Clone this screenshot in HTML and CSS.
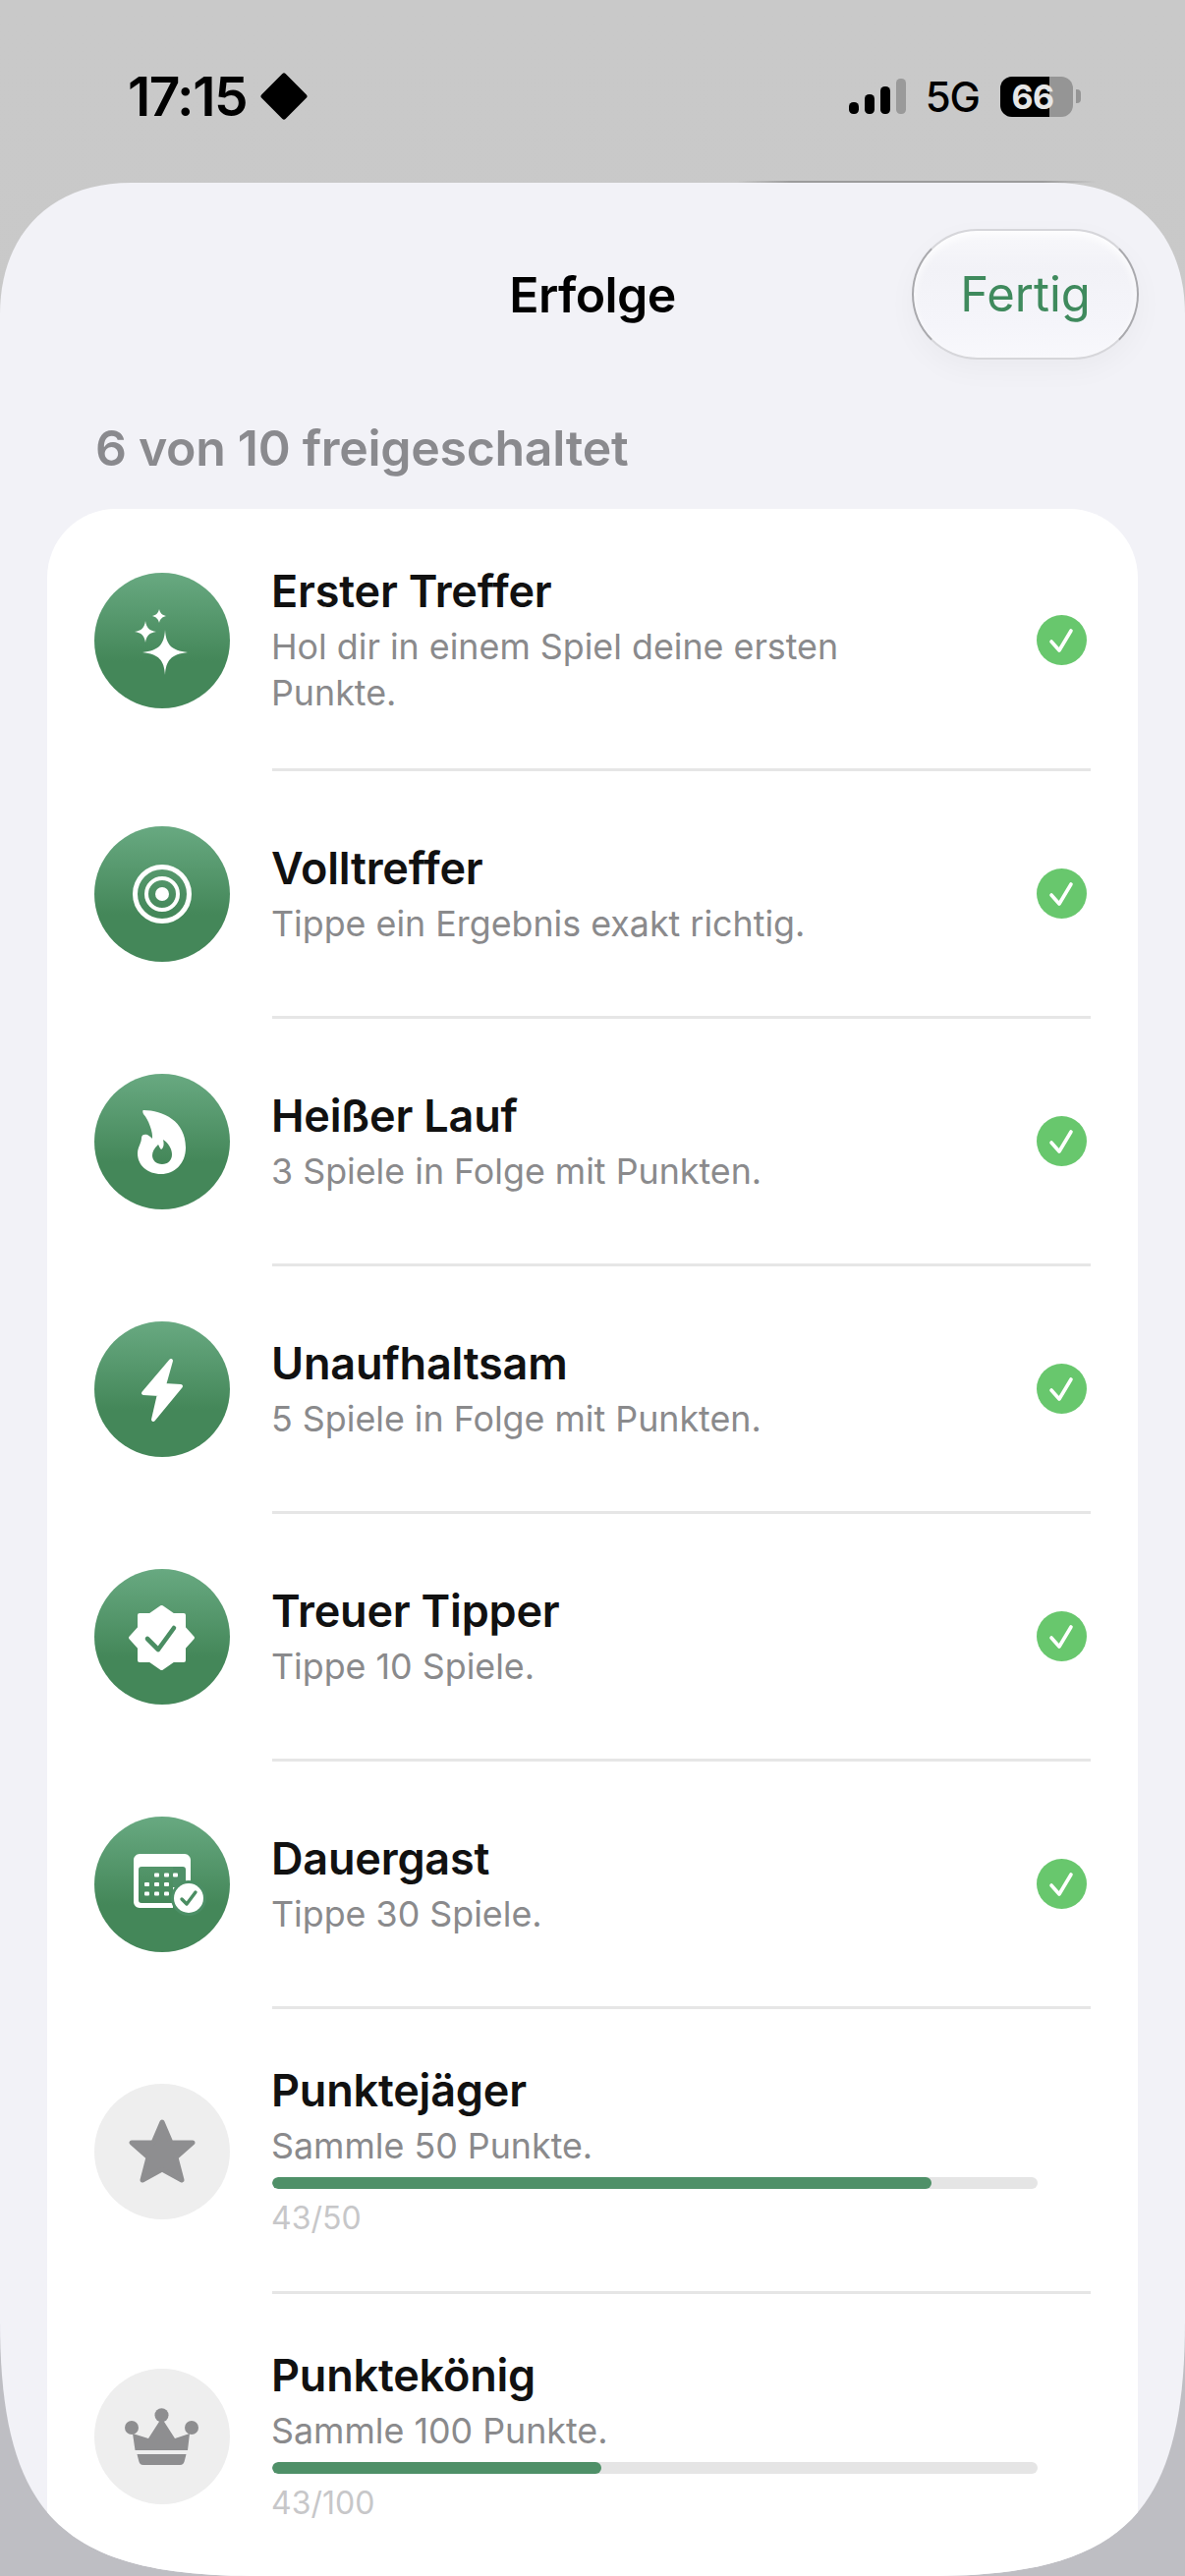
FILE: index.html
```html
<!DOCTYPE html>
<html lang="de">
<head>
<meta charset="utf-8">
<title>Erfolge</title>
<link rel="stylesheet" href="styles.css">
</head>
<body>
<header class="status">
  <div class="status-left">
    <span class="time">17:15</span>
    <svg class="focus" viewBox="0 0 46 46"><path d="M23 3 L43 23 L23 43 L3 23 Z" fill="#000" stroke="#000" stroke-width="5" stroke-linejoin="round"/></svg>
  </div>
  <div class="status-right">
    <svg class="signal" viewBox="0 0 58 36"><rect x="0" y="24" width="10" height="12" rx="4.5" fill="#000"/><rect x="16" y="16" width="10" height="20" rx="4.5" fill="#000"/><rect x="32" y="8" width="10" height="28" rx="4.5" fill="#000"/><rect x="48" y="0" width="10" height="36" rx="4.5" fill="#9a9a9a"/></svg>
    <span class="net">5G</span>
    <div class="battery"><div class="battery-level"></div><span class="battery-text">66</span></div>
    <div class="battery-nub"></div>
  </div>
  <div class="edge"></div>
</header>

<main class="sheet">
  <div class="nav">
    <span></span>
    <h1 class="nav-title">Erfolge</h1>
    <button class="done">Fertig</button>
  </div>
  <p class="summary">6 von 10 freigeschaltet</p>

  <section class="card">
    <div class="row">
      <div class="badge">
        <svg viewBox="0 0 138 138"><path class="w" d="M72 58C73 73 78 79 95 81C78 83 73 89 72 104C71 89 66 83 49 81C66 79 71 73 72 58Z"/><path class="w" d="M52 49C53 56 56 59 63 60C56 61 53 64 52 71C51 64 48 61 41 60C48 59 51 56 52 49Z"/><path class="w" d="M66 37C67 41 69 43 73 44C69 45 67 47 66 51C65 47 63 45 59 44C63 43 65 41 66 37Z"/></svg>
      </div>
      <div class="text">
        <h2 class="name">Erster Treffer</h2>
        <p class="desc">Hol dir in einem Spiel deine ersten<br>Punkte.</p>
      </div>
      <svg class="tick" viewBox="0 0 51 51"><circle cx="25.5" cy="25.5" r="25.5" fill="#68c76d"/><path d="M15 27L23 36L35 16" fill="none" stroke="#fff" stroke-width="3.6" stroke-linecap="round" stroke-linejoin="round"/></svg>
    </div>
    <div class="sep"></div>

    <div class="row">
      <div class="badge">
        <svg viewBox="0 0 138 138"><circle cx="69" cy="69" r="27.5" fill="none" stroke="#fff" stroke-width="5"/><circle cx="69" cy="69" r="16" fill="none" stroke="#fff" stroke-width="4"/><circle cx="69" cy="69" r="7" fill="#fff"/></svg>
      </div>
      <div class="text">
        <h2 class="name">Volltreffer</h2>
        <p class="desc">Tippe ein Ergebnis exakt richtig.</p>
      </div>
      <svg class="tick" viewBox="0 0 51 51"><circle cx="25.5" cy="25.5" r="25.5" fill="#68c76d"/><path d="M15 27L23 36L35 16" fill="none" stroke="#fff" stroke-width="3.6" stroke-linecap="round" stroke-linejoin="round"/></svg>
    </div>
    <div class="sep"></div>

    <div class="row">
      <div class="badge">
        <svg viewBox="0 0 138 138"><path class="w" fill-rule="evenodd" d="M50 37C70 37 93 48 93 75C93 92 81 102 68 102C54 102 44 93 44 81C44 74 48 71 48 65C48 62 51 61 54 62C56 63 58 65 59 66C60 60 55 46 50 41C49 39 49 37 50 37ZM70 67C71 71 71 75 68 77C66 75 66 73 65 72C61 76 59 79 59 83C59 88 63 92 69 92C75 92 79 88 79 82C79 76 75 70 70 67Z"/></svg>
      </div>
      <div class="text">
        <h2 class="name">Heißer Lauf</h2>
        <p class="desc">3 Spiele in Folge mit Punkten.</p>
      </div>
      <svg class="tick" viewBox="0 0 51 51"><circle cx="25.5" cy="25.5" r="25.5" fill="#68c76d"/><path d="M15 27L23 36L35 16" fill="none" stroke="#fff" stroke-width="3.6" stroke-linecap="round" stroke-linejoin="round"/></svg>
    </div>
    <div class="sep"></div>

    <div class="row">
      <div class="badge">
        <svg viewBox="0 0 138 138"><path class="w sw" d="M78 40L50 73L66 74L60 100L88 66L71 65Z"/></svg>
      </div>
      <div class="text">
        <h2 class="name">Unaufhaltsam</h2>
        <p class="desc">5 Spiele in Folge mit Punkten.</p>
      </div>
      <svg class="tick" viewBox="0 0 51 51"><circle cx="25.5" cy="25.5" r="25.5" fill="#68c76d"/><path d="M15 27L23 36L35 16" fill="none" stroke="#fff" stroke-width="3.6" stroke-linecap="round" stroke-linejoin="round"/></svg>
    </div>
    <div class="sep"></div>

    <div class="row">
      <div class="badge">
        <svg viewBox="0 0 138 138"><path class="w sw" d="M68.5 39L80 47H91V60L100 70L91 80V93H80L68.5 101L57 93H46V80L37 70L46 60V47H57Z"/><path d="M54 71L65 82L81 60" fill="none" stroke="#4a8d62" stroke-width="4.6" stroke-linecap="round" stroke-linejoin="round"/></svg>
      </div>
      <div class="text">
        <h2 class="name">Treuer Tipper</h2>
        <p class="desc">Tippe 10 Spiele.</p>
      </div>
      <svg class="tick" viewBox="0 0 51 51"><circle cx="25.5" cy="25.5" r="25.5" fill="#68c76d"/><path d="M15 27L23 36L35 16" fill="none" stroke="#fff" stroke-width="3.6" stroke-linecap="round" stroke-linejoin="round"/></svg>
    </div>
    <div class="sep"></div>

    <div class="row">
      <div class="badge">
        <svg viewBox="0 0 138 138">
          <path class="w" fill-rule="evenodd" d="M46 38H92C95 38 98 41 98 44V80H80V93H46C43 93 40 90 40 87V44C40 41 43 38 46 38ZM48 51C46 51 45 52 45 54V85C45 87 46 88 48 88H80V51Z"/>
          <path d="M80 51H90C92 51 93 52 93 54V72H80Z" fill="#4f9068"/>
          <g class="w"><rect x="61" y="57.5" width="5" height="4" rx="1"/><rect x="71" y="57.5" width="5" height="4" rx="1"/><rect x="80" y="57.5" width="5" height="4" rx="1"/><rect x="51" y="67" width="5" height="4" rx="1"/><rect x="61" y="67" width="5" height="4" rx="1"/><rect x="71" y="67" width="5" height="4" rx="1"/><rect x="51" y="76.5" width="5" height="4" rx="1"/><rect x="61" y="76.5" width="5" height="4" rx="1"/><rect x="71" y="76.5" width="5" height="4" rx="1"/></g>
          <circle cx="96" cy="83" r="18" fill="#4c8f66"/>
          <circle cx="96" cy="83" r="15" fill="#fff"/>
          <path d="M89 84L94 89L103 77" fill="none" stroke="#4a8d62" stroke-width="3.4" stroke-linecap="round" stroke-linejoin="round"/>
        </svg>
      </div>
      <div class="text">
        <h2 class="name">Dauergast</h2>
        <p class="desc">Tippe 30 Spiele.</p>
      </div>
      <svg class="tick" viewBox="0 0 51 51"><circle cx="25.5" cy="25.5" r="25.5" fill="#68c76d"/><path d="M15 27L23 36L35 16" fill="none" stroke="#fff" stroke-width="3.6" stroke-linecap="round" stroke-linejoin="round"/></svg>
    </div>
    <div class="sep"></div>

    <div class="row progress">
      <div class="badge locked">
        <svg viewBox="0 0 138 138"><path class="g" d="M69 39L78 60H100L83 75L89 98L69 87L49 98L55 75L38 60H60Z"/></svg>
      </div>
      <div class="text">
        <h2 class="name">Punktejäger</h2>
        <p class="desc">Sammle 50 Punkte.</p>
        <div class="track"><div class="fill" style="width:86.2%"></div></div>
        <p class="count">43/50</p>
      </div>
    </div>
    <div class="sep"></div>

    <div class="row progress">
      <div class="badge locked">
        <svg viewBox="0 0 138 138"><g class="gf"><circle cx="68.5" cy="47.3" r="7"/><circle cx="38" cy="60" r="7"/><circle cx="99" cy="60" r="7"/><path d="M39 66L55 71L68.5 50L82 71L97 66L95 83H41.5Z"/><path d="M43.5 87H93.5L92 93C91.5 96 90 98 87 98H50C47 98 45.5 96 45 93Z"/></g></svg>
      </div>
      <div class="text">
        <h2 class="name">Punktekönig</h2>
        <p class="desc">Sammle 100 Punkte.</p>
        <div class="track"><div class="fill" style="width:43%"></div></div>
        <p class="count">43/100</p>
      </div>
    </div>
  </section>
</main>
</body>
</html>
```

FILE: styles.css
```css
* { box-sizing: border-box; }
html, body { margin: 0; padding: 0; }
body {
  width: 1206px;
  height: 2622px;
  overflow: hidden;
  background: linear-gradient(#c9c9c9 0, #c8c8c8 1400px, #bebec3 2300px);
  font-family: Inter, "Liberation Sans", sans-serif;
  color: #000;
}
.status {
  position: relative;
  height: 186px;
  display: flex;
  justify-content: space-between;
  align-items: flex-start;
  padding: 72px 106px 0 130px;
}
.edge {
  position: absolute;
  left: 750px;
  right: 90px;
  bottom: 0;
  height: 2px;
  background: linear-gradient(90deg, rgba(150,150,150,0), #9c9c9c 15%, #9c9c9c 85%, rgba(150,150,150,0));
}
.status-left { display: flex; align-items: center; gap: 14px; }
.time { font-size: 55px; line-height: 52px; font-weight: 600; letter-spacing: -1.5px; }
.focus { width: 48px; height: 48px; }
.status-right { display: flex; align-items: center; height: 52px; }
.signal { width: 58px; height: 36px; margin-right: 20px; }
.net { font-size: 42px; font-weight: 500; letter-spacing: -1px; margin-right: 21px; }
.battery {
  position: relative;
  width: 74px;
  height: 41px;
  border-radius: 12px;
  background: #959595;
  overflow: hidden;
  display: flex;
  align-items: center;
  justify-content: center;
}
.battery-level { position: absolute; left: 0; top: 0; bottom: 0; width: 50px; background: #000; }
.battery-text { position: relative; color: #e6e6e6; font-size: 34px; font-weight: 700; letter-spacing: -0.5px; margin-left: -8px; }
.battery-nub { width: 5px; height: 14px; margin-left: 3px; border-radius: 0 4px 4px 0; background: #959595; }

.sheet {
  height: 2436px;
  background: #f2f2f7;
  clip-path: path("M133 0H1073C1154 0 1206 52 1206 134V2176C1206 2373 1143 2436 946 2436H260C63 2436 0 2373 0 2176V134C0 52 52 0 133 0Z");
  display: flex;
  flex-direction: column;
}
.nav {
  display: grid;
  grid-template-columns: 1fr auto 1fr;
  align-items: center;
  padding: 47px 47px 0;
}
.nav-title { margin: 0; font-size: 50px; line-height: 60px; font-weight: 600; letter-spacing: -0.6px; }
.done {
  justify-self: end;
  width: 231px;
  height: 133px;
  border-radius: 67px;
  border: 2px solid;
  border-color: #d6d6da #a9a9ad;
  background: linear-gradient(#f8f8fb, #f2f2f7 30%, #f5f5fa 75%, #f8f8fc);
  box-shadow: 0 10px 30px rgba(0, 0, 0, 0.035), inset 0 4px 8px rgba(255, 255, 255, 0.9);
  color: #3f8a5d;
  font-family: inherit;
  font-size: 49px;
  padding: 0;
}
.summary {
  margin: 62px 0 0 97px;
  font-size: 50px;
  line-height: 56px;
  font-weight: 600;
  letter-spacing: -0.3px;
  color: #8a8a8e;
}
.card {
  flex: 1;
  margin: 34px 48px 0;
  padding: 3px 48px 0;
  background: #fff;
  border-radius: 70px 70px 0 0;
}
.row {
  display: flex;
  align-items: center;
  gap: 43px;
  min-height: 249px;
  padding: 53px 4px 53px 0;
}
.row.progress { padding: 55px 4px 52px 0; }
.badge {
  flex: none;
  width: 138px;
  height: 138px;
  border-radius: 50%;
  background: linear-gradient(#68a981, #448759 65%);
}
.badge svg { display: block; width: 138px; height: 138px; }
.badge.locked { background: #eeeeee; }
.w { fill: #fff; }
.sw { stroke: #fff; stroke-width: 4; stroke-linejoin: round; }
.g { fill: #8e8e90; stroke: #8e8e90; stroke-width: 5; stroke-linejoin: round; }
.gf { fill: #8e8e90; }
.text { flex: 1; min-width: 0; }
.name { margin: 0 0 5px -1px; font-size: 45px; line-height: 56px; font-weight: 600; letter-spacing: -0.2px; color: #111; }
.desc { margin: 0 0 0 -1px; font-size: 35.8px; line-height: 47px; color: #8a8a8c; }
.tick { flex: none; width: 51px; height: 51px; }
.sep { height: 3px; margin-left: 181px; background: #e6e6e6; }
.track { height: 12px; border-radius: 6px; background: #e5e5e5; margin: 8px 50px 0 0; overflow: hidden; }
.fill { height: 100%; border-radius: 6px; background: #4f9068; }
.count { margin: 8px 0 0 -1px; font-size: 32px; line-height: 44px; color: #c7c7c9; }
```
